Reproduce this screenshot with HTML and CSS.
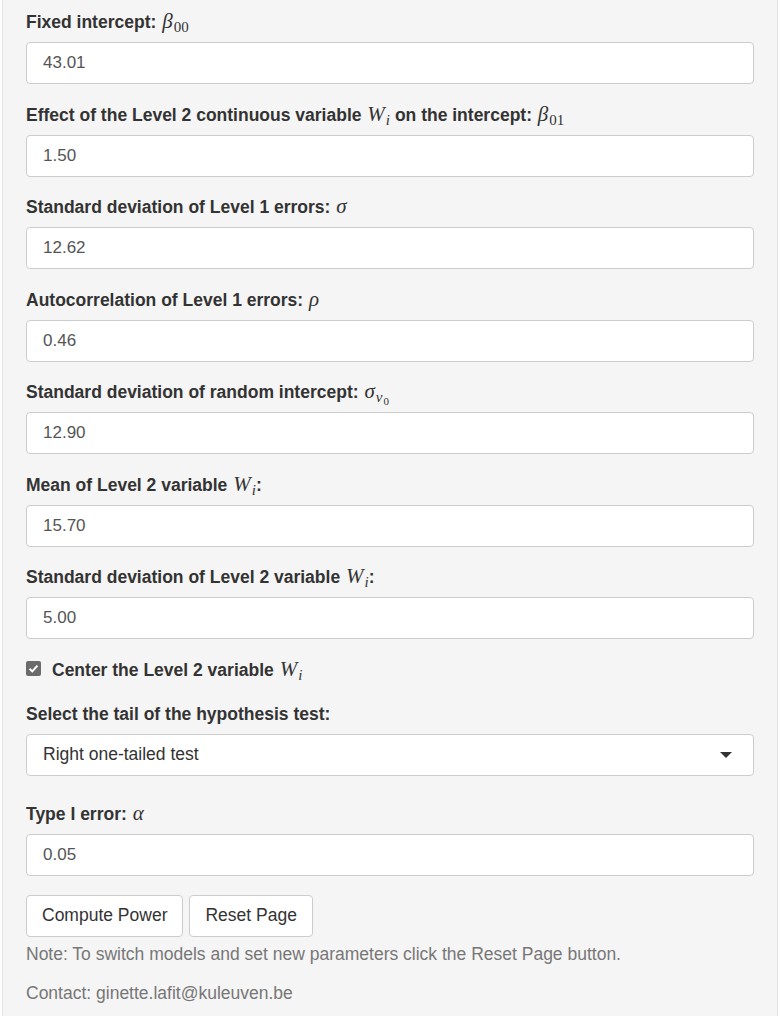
FILE: index.html
```html
<!DOCTYPE html>
<html>
<head>
<meta charset="utf-8">
<link rel="stylesheet" href="styles.css">
</head>
<body>
<div class="well">
  <div class="group">
    <label class="lbl">Fixed intercept: <span class="math"><i>β</i><sub class="num">00</sub></span></label>
    <div class="input">43.01</div>
  </div>
  <div class="group">
    <label class="lbl">Effect of the Level 2 continuous variable <span class="math"><i>W</i><sub><i>i</i></sub></span> on the intercept: <span class="math"><i>β</i><sub class="num">01</sub></span></label>
    <div class="input">1.50</div>
  </div>
  <div class="group">
    <label class="lbl">Standard deviation of Level 1 errors: <span class="math"><i>σ</i></span></label>
    <div class="input">12.62</div>
  </div>
  <div class="group">
    <label class="lbl">Autocorrelation of Level 1 errors: <span class="math"><i>ρ</i></span></label>
    <div class="input">0.46</div>
  </div>
  <div class="group">
    <label class="lbl">Standard deviation of random intercept: <span class="math"><i>σ</i><sub><i>ν</i><sub class="num sub2">0</sub></sub></span></label>
    <div class="input">12.90</div>
  </div>
  <div class="group">
    <label class="lbl">Mean of Level 2 variable <span class="math"><i>W</i><sub><i>i</i></sub></span>:</label>
    <div class="input">15.70</div>
  </div>
  <div class="group">
    <label class="lbl">Standard deviation of Level 2 variable <span class="math"><i>W</i><sub><i>i</i></sub></span>:</label>
    <div class="input">5.00</div>
  </div>
  <div class="check-row">
    <span class="checkbox"><svg width="11" height="11" viewBox="0 0 11 11"><path d="M1.6 5.8 L4.3 8.4 L9.4 2.6" fill="none" stroke="#fff" stroke-width="2"/></svg></span>
    <span class="check-text">Center the Level 2 variable <span class="math"><i>W</i><sub><i>i</i></sub></span></span>
  </div>
  <div class="group select-group">
    <label class="lbl">Select the tail of the hypothesis test:</label>
    <div class="select">
      <span>Right one-tailed test</span>
      <span class="caret"></span>
    </div>
  </div>
  <div class="group last-group">
    <label class="lbl">Type I error: <span class="math"><i>α</i></span></label>
    <div class="input">0.05</div>
  </div>
  <div class="buttons">
    <button class="btn">Compute Power</button>
    <button class="btn">Reset Page</button>
  </div>
  <p class="note">Note: To switch models and set new parameters click the Reset Page button.</p>
  <p class="note contact">Contact: ginette.lafit@kuleuven.be</p>
</div>
</body>
</html>
```
FILE: styles.css
```css
html, body {
  margin: 0;
  padding: 0;
  background: #ffffff;
  height: 1016px;
  overflow: hidden;
}
body {
  font-family: "Liberation Sans", Arial, sans-serif;
  font-size: 17.5px;
  color: #333333;
}
.well {
  margin-left: 2px;
  width: 776px;
  box-sizing: border-box;
  background: #f5f5f5;
  border-left: 1px solid #e3e3e3;
  border-right: 1px solid #e3e3e3;
  padding: 12px 23px 40px 23px;
  min-height: 1016px;
}
.group {
  margin-bottom: 20.5px;
}
.lbl {
  display: block;
  font-weight: bold;
  line-height: 20px;
  height: 20px;
  margin-bottom: 10px;
  white-space: nowrap;
}
.math {
  font-family: "Liberation Serif", "Times New Roman", serif;
  font-weight: normal;
  font-size: 21px;
  line-height: 0;
  margin-left: 1px;
}
.math i {
  font-style: italic;
}
.math sub {
  font-size: 15px;
  vertical-align: -4px;
  line-height: 0;
  margin-left: 1px;
}
.math sub.sub2 {
  font-size: 11px;
  vertical-align: -3px;
}
.input, .select {
  box-sizing: border-box;
  height: 42px;
  background: #ffffff;
  border: 1px solid #cccccc;
  border-radius: 4px;
  padding: 0 16px;
  display: flex;
  align-items: center;
  color: #555555;
  font-size: 17px;
}
.select {
  color: #333333;
  font-size: 17.5px;
  justify-content: space-between;
  padding-right: 21px;
}
.caret {
  width: 0;
  height: 0;
  border-left: 6px solid transparent;
  border-right: 6px solid transparent;
  border-top: 6px solid #333333;
  margin-top: 1px;
}
.check-row {
  display: flex;
  align-items: center;
  height: 20px;
  line-height: 20px;
  margin-bottom: 24px;
}
.checkbox {
  box-sizing: border-box;
  width: 15px;
  height: 15px;
  background: #6b6b6b;
  border-radius: 2px;
  display: flex;
  align-items: center;
  justify-content: center;
  margin-right: 11px;
  margin-top: -2px;
}
.checkbox svg {
  display: block;
}
.check-text {
  font-weight: bold;
  white-space: nowrap;
}
.select-group {
  margin-bottom: 28px;
}
.last-group {
  margin-bottom: 19px;
}
.buttons {
  display: flex;
  gap: 6px;
}
.btn {
  box-sizing: border-box;
  height: 42px;
  padding: 0 15px;
  background: #ffffff;
  border: 1px solid #cccccc;
  border-radius: 4px;
  font-family: "Liberation Sans", Arial, sans-serif;
  font-size: 17.5px;
  color: #333333;
}
.note {
  margin: 7px 0 0 0;
  line-height: 20px;
  color: #777777;
}
.contact {
  margin-top: 19px;
}
```
